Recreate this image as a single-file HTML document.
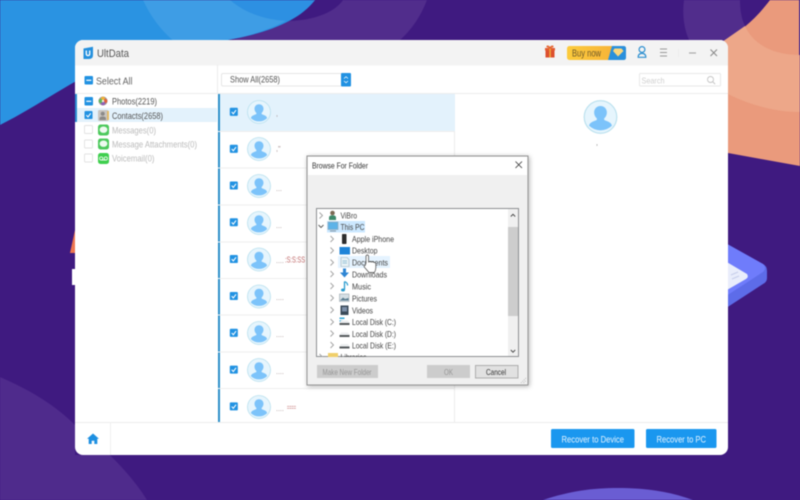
<!DOCTYPE html>
<html lang="en">
<head>
<meta charset="utf-8">
<title>UltData</title>
<style>
html,body{margin:0;padding:0;width:800px;height:500px;overflow:hidden;background:#3f1a80}
#w{position:relative;width:800px;height:500px;overflow:hidden}
svg{display:block;position:absolute;left:0;top:0;filter:blur(.4px)}
text{font-family:"Liberation Sans",sans-serif;white-space:pre}
</style>
</head>
<body>
<div id="w">
<svg width="800" height="500" viewBox="0 0 800 500" xmlns="http://www.w3.org/2000/svg">
<defs>
<symbol id="av" viewBox="0 0 24 24" overflow="visible">
  <circle cx="12" cy="12" r="11.500" fill="#e6f5fd" stroke="#b9e0ee" stroke-width=".8"/>
  <path d="M12 4.200c2.700 0 4.500 2 4.500 4.600 0 1.800-.8 3.200-1.900 4.200v1c1.400.9 4.900 1.300 5.500 4.100a11.500 11.500 0 0 1-16.200 0c.6-2.800 4.100-3.200 5.500-4.100v-1c-1.100-1-1.900-2.400-1.900-4.200 0-2.600 1.800-4.600 4.500-4.600z" fill="#7cc3fa"/>
</symbol>
<symbol id="ck" viewBox="0 0 9 9" overflow="visible">
  <rect width="8.500" height="8.500" rx="1" fill="#2192e2"/>
  <path d="M2 4.400l1.700 1.900L6.600 2.400" fill="none" stroke="#fff" stroke-width="1.100"/>
</symbol>
<symbol id="chev" viewBox="0 0 6 8" overflow="visible">
  <path d="M1.500 1l3 3-3 3" fill="none" stroke="#a0a0a0" stroke-width=".9"/>
</symbol>
<symbol id="disk" viewBox="0 0 11 8" overflow="visible">
  <path d="M2 2.500h7l1.500 2.500h-10z" fill="#eceef0"/>
  <rect x=".5" y="5" width="10" height="2" fill="#55595c"/>
</symbol>
<symbol id="msg" viewBox="0 0 11 11" overflow="visible">
  <rect width="11" height="11" rx="2.500" fill="#4cc95c"/>
  <ellipse cx="5.500" cy="5.200" rx="3.900" ry="3.200" fill="#eefaf0"/>
</symbol>
<clipPath id="tree"><rect x="317" y="209" width="191" height="148"/></clipPath>
<clipPath id="win"><rect x="75" y="40" width="653" height="415" rx="8"/></clipPath>
<linearGradient id="buy" x1="0" y1="0" x2="1" y2="0"><stop offset="0" stop-color="#fccb3c"/><stop offset="1" stop-color="#f6ad38"/></linearGradient>
<filter id="sh" x="-10%" y="-10%" width="120%" height="120%"><feDropShadow dx="1" dy="1" stdDeviation="2.500" flood-color="#000" flood-opacity=".3"/></filter>
</defs>

<!-- background -->
<rect width="800" height="500" fill="#3f1a80"/>
<path d="M290 21C315 20 335 12 343 0H427C420 18 411 30 400 40H233Z" fill="#512d8c"/>
<path d="M0 0H315C300 20 270 32 233 39C190 48 150 52 110 65C75 78 40 105 0 125Z" fill="#2a93e2"/>
<path d="M143 0C150 15 160 30 175 42L233 39C262 33 292 22 315 0Z" fill="#3e9de5"/>
<path d="M230 0C245 13 265 20 288 21C298 15 308 8 315 0Z" fill="#2d90e2"/>
<path d="M684 0C682 15 684 30 690 42H725C733 36 740 31 745 26C741 18 740 8 740 0Z" fill="#512d8c"/>
<path d="M770 0C755 20 740 32 722 42L728 153L800 166V0Z" fill="#ea9a7c"/>
<path d="M722 42L745 26C752 42 770 55 800 55V112C775 112 750 105 728 94Z" fill="#eda789"/>
<rect x="799" y="0" width="1" height="55" fill="#5a3a90"/>
<path d="M0 377C30 390 55 405 75 425V455H110C125 470 137 484 147 500H0Z" fill="#4f2b8c"/>
<path d="M543 500C570 491 592 488 618 488C644 488 668 491 693 500Z" fill="#6a5dd3"/>
<path d="M720 240L763 264Q767 266 767 271V278Q767 282 763 284L720 312Z" fill="#5d6ce9"/>
<path d="M720 240L763 264Q767 268 763 272L720 300Z" fill="#6f7cfb"/>
<path d="M720 258L747 274Q749 277 746 279L720 294Z" fill="#e9edfb"/>
<path d="M731 275l7-3M732 279l7-3" stroke="#c6cdea" stroke-width="1.200"/>
<path d="M70 253L75 230V253Z" fill="#ee7650"/>
<rect x="72" y="269" width="5" height="16" fill="#fff"/>

<!-- window -->
<rect x="75" y="40" width="653" height="415" rx="8" fill="#fff"/>
<g clip-path="url(#win)">
  <rect x="75" y="40" width="653" height="25.500" fill="#f3f3f3"/>
  <rect x="217" y="65" width="1" height="29" fill="#ececec"/>
  <rect x="75" y="93" width="653" height="1" fill="#ececec"/>
  <rect x="75" y="422" width="653" height="1" fill="#ececec"/>
  <rect x="110" y="422" width="1" height="33" fill="#f0f0f0"/>
  <rect x="454" y="94" width="1" height="328" fill="#ececec"/>
  <rect x="75" y="108" width="142" height="14" fill="#e3f2fc"/>
  <rect x="75" y="94" width="2" height="28" fill="#2b8fd2"/>
  <rect x="218" y="94" width="237" height="37" fill="#e3f2fc"/>
  <rect x="218" y="94" width="2" height="328" fill="#2b8fc9"/>
  <g fill="#eeeeee">
    <rect x="218" y="131" width="236" height="1"/><rect x="218" y="167.500" width="236" height="1"/>
    <rect x="218" y="204.500" width="236" height="1"/><rect x="218" y="241.500" width="236" height="1"/>
    <rect x="218" y="278" width="236" height="1"/><rect x="218" y="314.500" width="236" height="1"/>
    <rect x="218" y="351.500" width="236" height="1"/><rect x="218" y="388" width="236" height="1"/>
  </g>
</g>

<!-- title bar -->
<path d="M83.500 48.500L93 46.800V55Q93 59 89 59H83.500Z" fill="#2490dd"/>
<path d="M86.300 50.500v3.300q0 1.800 1.700 1.800t1.700-1.800v-3.300" fill="none" stroke="#fff" stroke-width="1.300"/>
<text x="97" y="57" font-size="11" fill="#555" textLength="32" lengthAdjust="spacingAndGlyphs">UltData</text>

<rect x="545.500" y="49.500" width="9" height="8" fill="#dc4f2e"/>
<rect x="545" y="48" width="10" height="2.500" fill="#e25a30"/>
<rect x="549.300" y="48" width="1.500" height="9.500" fill="#f0a93c"/>
<path d="M550 48c-1-3-4-2.500-3-1zM550 48c1-3 4-2.500 3-1z" fill="#f0903a" stroke="#e0552e" stroke-width=".7"/>

<rect x="567" y="46" width="59" height="14" rx="2.500" fill="url(#buy)"/>
<path d="M612 46H623.500Q626 46 626 48.500V57.500Q626 60 623.500 60H608Z" fill="#2a90dc"/>
<text x="572" y="56.500" font-size="10" fill="#6f5a2a" textLength="29" lengthAdjust="spacingAndGlyphs">Buy now</text>
<path d="M614.500 48.500h7l2 2.500-5.500 5.500L613 51z" fill="#fbd77e"/>

<circle cx="642" cy="49.500" r="2.900" fill="none" stroke="#2c8fd0" stroke-width="1.200"/>
<path d="M638.200 57.300q0-3.900 3.800-3.900t3.800 3.900z" fill="none" stroke="#2c8fd0" stroke-width="1.200"/>
<path d="M660 49h7M660 52.500h7M660 56h7" stroke="#999" stroke-width="1"/>
<rect x="678" y="49" width="1" height="8" fill="#ececec"/>
<path d="M689 53h7" stroke="#aaa" stroke-width="1.200"/>
<path d="M710.500 49.500l6.500 6.500M717 49.500l-6.500 6.500" stroke="#888" stroke-width="1"/>

<!-- select all -->
<rect x="84.500" y="76" width="8.500" height="8.500" rx="1" fill="#2192e2"/>
<rect x="86.300" y="79.700" width="5" height="1.200" fill="#fff"/>
<text x="96" y="84.500" font-size="10.500" fill="#666" textLength="36.500" lengthAdjust="spacingAndGlyphs">Select All</text>

<!-- dropdown -->
<rect x="221.500" y="73.500" width="129" height="12.500" rx="1.500" fill="#fff" stroke="#e6e6e6"/>
<rect x="341" y="73" width="10" height="13.500" rx="1" fill="#2192e2"/>
<path d="M344 78.500l2-1.800 2 1.800M344 81l2 1.800 2-1.800" fill="none" stroke="#fff" stroke-width=".7"/>
<text x="230" y="82.500" font-size="9" fill="#555" textLength="50" lengthAdjust="spacingAndGlyphs">Show All(2658)</text>

<!-- search -->
<rect x="639.500" y="73.500" width="81" height="12.500" rx="1" fill="#fff" stroke="#e8e8e8"/>
<text x="641.500" y="83.500" font-size="8.500" fill="#cfcfcf" textLength="23" lengthAdjust="spacingAndGlyphs">Search</text>
<circle cx="710.500" cy="79.500" r="3" fill="none" stroke="#c4c4c4" stroke-width=".9"/>
<path d="M712.800 81.800l2.300 2.300" stroke="#c4c4c4" stroke-width="1"/>

<!-- sidebar -->
<rect x="84.500" y="97" width="8.500" height="8.500" rx="1" fill="#2192e2"/>
<rect x="86.300" y="100.700" width="5" height="1.200" fill="#fff"/>
<use href="#ck" x="84.500" y="111" width="8.500" height="8.500"/>
<g fill="#fff" stroke="#e2e2e2" stroke-width=".9">
  <rect x="84.500" y="125.500" width="8" height="8" rx="1"/>
  <rect x="84.500" y="140" width="8" height="8" rx="1"/>
  <rect x="84.500" y="154" width="8" height="8" rx="1"/>
</g>
<circle cx="103" cy="101" r="4.500" fill="#9a8f90"/>
<circle cx="103" cy="98.800" r="2" fill="#f2b233"/><circle cx="105.300" cy="101" r="2" fill="#e0603a"/>
<circle cx="103" cy="103.300" r="2" fill="#8e5fb8"/><circle cx="100.700" cy="101" r="2" fill="#5fb85a"/>
<circle cx="103" cy="101" r="1.200" fill="#f6efe3"/>
<rect x="98" y="110" width="10.500" height="11" rx="1.500" fill="#c9c5c0"/>
<circle cx="102.700" cy="113.800" r="2" fill="#8c8a88"/>
<path d="M99.500 120v-1.500q0-2 3.200-2t3.200 2v1.500z" fill="#8c8a88"/>
<rect x="107.300" y="111" width="1.500" height="9" fill="#e9b34a"/>
<use href="#msg" x="98" y="124.500" width="11" height="11"/>
<use href="#msg" x="98" y="138.500" width="11" height="11"/>
<rect x="98" y="153" width="11" height="11" rx="2.500" fill="#3fcf4e"/>
<circle cx="101.200" cy="158.500" r="1.600" fill="none" stroke="#fff" stroke-width=".8"/>
<circle cx="105.800" cy="158.500" r="1.600" fill="none" stroke="#fff" stroke-width=".8"/>
<path d="M101.200 160.100h4.600" stroke="#fff" stroke-width=".8"/>
<text x="112" y="104.300" font-size="9.500" fill="#555" textLength="45" lengthAdjust="spacingAndGlyphs">Photos(2219)</text>
<text x="112" y="118.800" font-size="9.500" fill="#555" textLength="51" lengthAdjust="spacingAndGlyphs">Contacts(2658)</text>
<text x="112" y="133.300" font-size="9.500" fill="#bbb" textLength="44" lengthAdjust="spacingAndGlyphs">Messages(0)</text>
<text x="112" y="147.300" font-size="9.500" fill="#bbb" textLength="85" lengthAdjust="spacingAndGlyphs">Message Attachments(0)</text>
<text x="112" y="161.300" font-size="9.500" fill="#bbb" textLength="42.500" lengthAdjust="spacingAndGlyphs">Voicemail(0)</text>

<!-- list rows -->
<use href="#ck" x="229.800" y="107.800" width="8.500" height="8.500"/>
<use href="#ck" x="229.800" y="144.800" width="8.500" height="8.500"/>
<use href="#ck" x="229.800" y="181.500" width="8.500" height="8.500"/>
<use href="#ck" x="229.800" y="218.200" width="8.500" height="8.500"/>
<use href="#ck" x="229.800" y="255" width="8.500" height="8.500"/>
<use href="#ck" x="229.800" y="292" width="8.500" height="8.500"/>
<use href="#ck" x="229.800" y="328.800" width="8.500" height="8.500"/>
<use href="#ck" x="229.800" y="365.600" width="8.500" height="8.500"/>
<use href="#ck" x="229.800" y="402.400" width="8.500" height="8.500"/>
<use href="#av" x="247" y="100" width="24" height="24"/>
<use href="#av" x="247" y="137" width="24" height="24"/>
<use href="#av" x="247" y="174" width="24" height="24"/>
<use href="#av" x="247" y="211" width="24" height="24"/>
<use href="#av" x="247" y="247.500" width="24" height="24"/>
<use href="#av" x="247" y="284.500" width="24" height="24"/>
<use href="#av" x="247" y="321" width="24" height="24"/>
<use href="#av" x="247" y="358" width="24" height="24"/>
<use href="#av" x="247" y="395" width="24" height="24"/>
<g font-size="7" fill="#a08a8a">
  <text x="276" y="116">,</text>
  <text x="276" y="151">,''</text>
  <text x="276" y="191">...</text>
  <text x="276" y="228">...</text>
  <text x="276" y="263">....</text>
  <text x="276" y="300">....</text>
  <text x="276" y="337">....</text>
  <text x="276" y="374">....</text>
  <text x="276" y="411">....</text>
</g>
<text x="285" y="262.500" font-size="8.500" fill="#c06a6a" textLength="20" lengthAdjust="spacingAndGlyphs">:S:S:SS</text>
<text x="287" y="410" font-size="8" fill="#c88080" textLength="9" lengthAdjust="spacingAndGlyphs">====</text>

<!-- detail -->
<use href="#av" x="583.500" y="100" width="34" height="34"/>
<text x="596" y="145" font-size="7" fill="#777">,</text>

<!-- bottom bar -->
<path d="M93 433.500l-6 5.300h1.700v5.200h3v-3.200h2.600v3.200h3v-5.200h1.700z" fill="#1d8fe1"/>
<rect x="551" y="429" width="83.500" height="19" rx="1.500" fill="#1a97ef"/>
<rect x="646" y="429" width="70.500" height="19" rx="1.500" fill="#1a97ef"/>
<text x="561.500" y="442.300" font-size="9.500" fill="#e6f4ff" textLength="62.500" lengthAdjust="spacingAndGlyphs">Recover to Device</text>
<text x="656.500" y="442.300" font-size="9.500" fill="#e6f4ff" textLength="49.500" lengthAdjust="spacingAndGlyphs">Recover to PC</text>

<!-- dialog -->
<rect x="307" y="156" width="221" height="229" fill="#f0f0f0" stroke="#949494" stroke-width="1" filter="url(#sh)"/>
<rect x="308" y="157" width="219" height="18" fill="#fff"/>
<text x="312" y="168.500" font-size="8.500" fill="#333" textLength="56" lengthAdjust="spacingAndGlyphs">Browse For Folder</text>
<path d="M515.500 161.500l6.500 6.500M522 161.500l-6.500 6.500" stroke="#333" stroke-width=".8"/>
<rect x="316.500" y="208.500" width="202" height="148" fill="#fff" stroke="#8c8f92"/>
<rect x="508" y="209" width="10" height="147" fill="#f0f0f0"/>
<rect x="508" y="227" width="10" height="89" fill="#cdcdcd"/>
<path d="M510.800 216.500l2.200-2.200 2.200 2.200M510.800 350l2.200 2.200 2.200-2.200" fill="none" stroke="#444" stroke-width=".9"/>

<g clip-path="url(#tree)">
  <rect x="327" y="221" width="38" height="11.500" fill="#cce8ff"/>
  <rect x="338" y="256" width="52" height="12" fill="#e5f3ff"/>
  <use href="#chev" x="318" y="211.500" width="6" height="8"/>
  <path d="M318.500 225l2.500 2.500 2.500-2.500" fill="none" stroke="#555" stroke-width=".9"/>
  <use href="#chev" x="329" y="235" width="6" height="8"/>
  <use href="#chev" x="329" y="246.500" width="6" height="8"/>
  <use href="#chev" x="329" y="258.500" width="6" height="8"/>
  <use href="#chev" x="329" y="270" width="6" height="8"/>
  <use href="#chev" x="329" y="282" width="6" height="8"/>
  <use href="#chev" x="329" y="294" width="6" height="8"/>
  <use href="#chev" x="329" y="306" width="6" height="8"/>
  <use href="#chev" x="329" y="318" width="6" height="8"/>
  <use href="#chev" x="329" y="329.500" width="6" height="8"/>
  <use href="#chev" x="329" y="341" width="6" height="8"/>
  <!-- ViBro -->
  <circle cx="332.500" cy="213" r="2.300" fill="#7c6a55"/>
  <path d="M329 220v-2.500q0-2.300 3.500-2.300t3.500 2.300v2.500z" fill="#3e8a6b"/>
  <!-- This PC -->
  <rect x="328" y="222" width="10" height="7.500" fill="#5db3e8" stroke="#8fa5b5" stroke-width=".6"/>
  <path d="M330 231h6" stroke="#8ba3b3" stroke-width="1.200"/>
  <!-- iPhone -->
  <rect x="342" y="234" width="4.500" height="10" rx=".7" fill="#2d2d2d"/>
  <!-- Desktop -->
  <rect x="339.500" y="247" width="10.500" height="7.500" fill="#1f84d8"/>
  <!-- Documents -->
  <path d="M341 257.500h6l2 2v7h-8z" fill="#e8f2f6" stroke="#9db3bd" stroke-width=".6"/>
  <path d="M342.500 261h4.500M342.500 263h4.500" stroke="#7fb4cc" stroke-width=".7"/>
  <!-- Downloads -->
  <path d="M343 268.500h3v4h3l-4.500 5-4.500-5h3z" fill="#2e86d4"/>
  <!-- Music -->
  <path d="M344.500 281.500v8" stroke="#2a9ccf" stroke-width="1.300"/>
  <path d="M344.500 281.500q3.500 1.500 3 4" fill="none" stroke="#2a9ccf" stroke-width="1.200"/>
  <ellipse cx="343" cy="290" rx="2" ry="1.500" fill="#2a9ccf"/>
  <!-- Pictures -->
  <rect x="339.500" y="294" width="9.500" height="7.500" fill="#d5dfe5" stroke="#8b98a0" stroke-width=".5"/>
  <path d="M340 300.500l3-3 2 1.500 3.500-1v2.500z" fill="#5b7d90"/>
  <!-- Videos -->
  <rect x="340.500" y="305.500" width="8" height="9.500" fill="#3a4a58"/>
  <rect x="342" y="307" width="5" height="4.500" fill="#7c8fa8"/>
  <!-- Disks -->
  <path d="M339.500 317.500h5v1.500h-5z" fill="#2fa4d4"/>
  <path d="M339.500 320.300h3v1.300h-3z" fill="#2fa4d4"/>
  <use href="#disk" x="339" y="318" width="11" height="8"/>
  <use href="#disk" x="339" y="330" width="11" height="8"/>
  <use href="#disk" x="339" y="341.500" width="11" height="8"/>
  <!-- Libraries -->
  <rect x="328" y="353" width="10" height="6" fill="#f0cf6a"/>
  <use href="#chev" x="318" y="353" width="6" height="8"/>
  <g font-size="8.500" fill="#444">
    <text x="340.500" y="218.300" textLength="16.500" lengthAdjust="spacingAndGlyphs">ViBro</text>
    <text x="340.500" y="229.800" textLength="24" lengthAdjust="spacingAndGlyphs">This PC</text>
    <text x="352" y="241.800" textLength="42" lengthAdjust="spacingAndGlyphs">Apple iPhone</text>
    <text x="352" y="253.300" textLength="25.500" lengthAdjust="spacingAndGlyphs">Desktop</text>
    <text x="352" y="265.300" textLength="36" lengthAdjust="spacingAndGlyphs">Documents</text>
    <text x="352" y="277.300" textLength="35" lengthAdjust="spacingAndGlyphs">Downloads</text>
    <text x="352" y="289.300" textLength="19" lengthAdjust="spacingAndGlyphs">Music</text>
    <text x="352" y="301.300" textLength="25" lengthAdjust="spacingAndGlyphs">Pictures</text>
    <text x="352" y="313.300" textLength="21" lengthAdjust="spacingAndGlyphs">Videos</text>
    <text x="352" y="324.800" textLength="44" lengthAdjust="spacingAndGlyphs">Local Disk (C:)</text>
    <text x="352" y="336.800" textLength="44" lengthAdjust="spacingAndGlyphs">Local Disk (D:)</text>
    <text x="352" y="348.300" textLength="44" lengthAdjust="spacingAndGlyphs">Local Disk (E:)</text>
    <text x="340.500" y="360" textLength="26" lengthAdjust="spacingAndGlyphs">Libraries</text>
  </g>
</g>

<!-- cursor -->
<path d="M366 263V256.500q0-1.500 1.300-1.500t1.300 1.500V262q1.500-.8 2.700 0 1.400-.6 2.500.4 1.500-.3 2 1V268q0 2.500-1.500 4.500h-5.300l-4.800-5.500q-.5-1.300 1-1.500z" fill="#fff" stroke="#444" stroke-width=".7"/>

<!-- dialog buttons -->
<rect x="317" y="365" width="61" height="13" fill="#cccccc"/>
<text x="322.500" y="374.800" font-size="8" fill="#969696" textLength="49" lengthAdjust="spacingAndGlyphs">Make New Folder</text>
<rect x="427" y="365" width="43" height="13" fill="#cccccc"/>
<text x="444" y="374.800" font-size="8" fill="#969696" textLength="9" lengthAdjust="spacingAndGlyphs">OK</text>
<rect x="475.500" y="365.500" width="42.500" height="12.500" fill="#e1e1e1" stroke="#adadad"/>
<text x="486" y="374.800" font-size="8.500" fill="#333" textLength="20" lengthAdjust="spacingAndGlyphs">Cancel</text>
<path d="M521 383l5-5M523.500 383l2.500-2.500" stroke="#b5b5b5" stroke-width=".8" stroke-dasharray="1 1"/>
</svg>
</div>
</body>
</html>
